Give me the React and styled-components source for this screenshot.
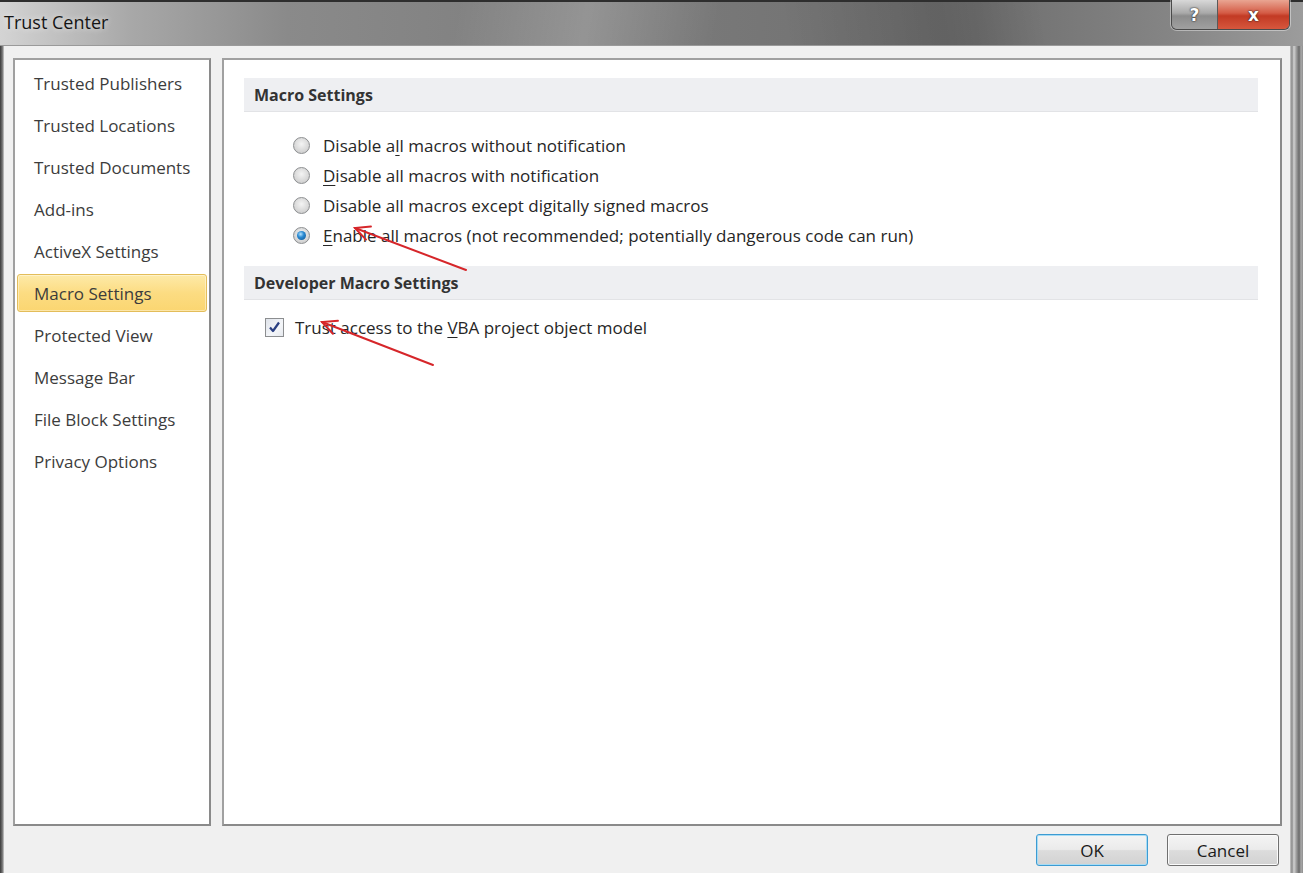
import React from "react";
import styled, { createGlobalStyle } from "styled-components";

const Global = createGlobalStyle`
  html, body {
    margin: 0;
    padding: 0;
    background: #f0f0f0;
  }
  body {
    font-family: "Open Sans", "Noto Sans", sans-serif;
  }
`;

const S = {};

S.Window = styled.div`
  position: relative;
  width: 1303px;
  height: 873px;
  display: flex;
  flex-direction: column;
  overflow: hidden;
  background: #f0f0f0;
`;

S.TitleBar = styled.div`
  height: 43px;
  display: flex;
  align-items: flex-start;
  justify-content: space-between;
  border-top: 2px solid #2e2e2e;
  border-bottom: 1px solid #9a9a9a;
  background:
    linear-gradient(100deg, rgba(255,255,255,0) 35%, rgba(255,255,255,0.18) 45%, rgba(255,255,255,0) 55%),
    linear-gradient(80deg, rgba(0,0,0,0) 60%, rgba(0,0,0,0.12) 72%, rgba(0,0,0,0) 80%),
    linear-gradient(to right, #d4d4d4 0%, #a8a8a8 10%, #8a8a8a 22%, #7a7a7a 50%, #6e6e6e 75%, #858585 90%, #9c9c9c 100%);
`;

S.Title = styled.div`
  padding: 8px 0 0 4px;
  font-size: 18px;
  color: #151515;
  text-shadow: 0 0 6px rgba(255,255,255,0.8);
`;

S.Caption = styled.div`
  display: flex;
  margin-right: 13px;
  margin-top: -2px;
  border: 1px solid #4a4a4a;
  border-top: none;
  border-radius: 0 0 6px 6px;
  overflow: hidden;
  box-shadow: 0 0 0 1px rgba(255,255,255,0.4);
`;

S.CaptionButton = styled.div`
  width: ${p => p.$w}px;
  height: 29px;
  display: flex;
  align-items: center;
  justify-content: center;
  font-family: "DejaVu Sans", sans-serif;
  font-weight: bold;
  font-size: 17px;
  color: #fff;
  text-shadow: 0 0 2px #222, 0 0 1px #222;
  background: ${p => p.$red
    ? "linear-gradient(to bottom, #e9a592 0%, #d45b45 45%, #c23a24 55%, #d6573d 100%)"
    : "linear-gradient(to bottom, #d8d8d8 0%, #a9a9a9 45%, #8c8c8c 55%, #a0a0a0 100%)"};
  border-left: ${p => p.$red ? "1px solid #5a5a5a" : "none"};
`;

S.Main = styled.div`
  flex: 1;
  display: flex;
`;

S.LeftEdge = styled.div`
  width: 4px;
  background: linear-gradient(to right, #3a3a3a, #777 60%, #cfcfcf);
`;

S.RightEdge = styled.div`
  width: 13px;
  background: linear-gradient(to right, #c8c8c8 0%, #8a8a8a 15%, #d2d2d2 30%, #9a9a9a 50%, #6a6a6a 70%, #a8a8a8 85%, #8f8f8f 100%);
`;

S.Body = styled.div`
  flex: 1;
  display: flex;
  flex-direction: column;
  padding: 12px 8px 0 9px;
  background: #f0f0f0;
`;

S.Panels = styled.div`
  height: 768px;
  display: flex;
  gap: 11px;
`;

S.Panel = styled.div`
  box-sizing: border-box;
  background: #fff;
  border: 2px solid #a0a0a0;
  border-right-color: #8a8a8a;
  border-bottom-color: #8a8a8a;
  width: ${p => p.$w ? `${p.$w}px` : "auto"};
  flex: ${p => p.$w ? "none" : 1};
`;

S.Nav = styled.div`
  display: flex;
  flex-direction: column;
  padding: 4px 2px 0 2px;
`;

S.NavItem = styled.div`
  height: 38px;
  margin-bottom: 4px;
  box-sizing: border-box;
  display: flex;
  align-items: center;
  padding-left: 16px;
  font-size: 17px;
  color: #3c3c3c;
  border-radius: 3px;
  border: 1px solid ${p => p.$active ? "#e3bd5a" : "transparent"};
  background: ${p => p.$active ? "linear-gradient(to bottom, #fdeaa8 0%, #fcdc82 50%, #fbd671 100%)" : "transparent"};
  box-shadow: ${p => p.$active ? "inset 0 0 0 1px rgba(255,255,255,0.4)" : "none"};
`;

S.Content = styled.div`
  padding: 18px 22px 0 20px;
  display: flex;
  flex-direction: column;
`;

S.SectionHeader = styled.div`
  height: 34px;
  box-sizing: border-box;
  display: flex;
  align-items: center;
  padding-left: 10px;
  background: #eeeff2;
  border-bottom: 1px solid #e2e3e6;
  font-size: 16px;
  font-weight: bold;
  color: #333;
`;

S.OptionList = styled.div`
  display: flex;
  flex-direction: column;
  padding: ${p => p.$pad};
`;

S.Option = styled.label`
  height: 30px;
  display: flex;
  align-items: center;
  font-size: 17px;
  color: #262626;
`;

S.Radio = styled.span`
  width: 17px;
  height: 17px;
  box-sizing: border-box;
  border-radius: 50%;
  border: 1px solid #8c8e90;
  background: radial-gradient(circle at 50% 40%, #f4f4f4 0%, #dadada 55%, #c4c4c4 100%);
  margin-right: 13px;
  display: flex;
  align-items: center;
  justify-content: center;
  &::after {
    content: "";
    display: ${p => p.$checked ? "block" : "none"};
    width: 9px;
    height: 9px;
    border-radius: 50%;
    background: radial-gradient(circle at 40% 35%, #b4e2ff 0%, #2a8ad2 40%, #0b4f8e 100%);
  }
`;

S.Check = styled.span`
  width: 19px;
  height: 19px;
  box-sizing: border-box;
  border: 1px solid #8c8e90;
  background: linear-gradient(135deg, #dfe3ea 0%, #f4f6f9 60%, #e6e9ee 100%);
  margin-right: 11px;
  display: flex;
  align-items: center;
  justify-content: center;
`;

S.Key = styled.span`
  text-decoration: underline;
  text-underline-offset: 3px;
`;

S.Footer = styled.div`
  flex: 1;
  display: flex;
  justify-content: flex-end;
  align-items: flex-start;
  gap: 19px;
  padding: 8px 3px 0 0;
`;

S.Button = styled.button`
  width: 112px;
  height: 32px;
  font-family: "Open Sans", "Noto Sans", sans-serif;
  font-size: 17px;
  color: #1a1a1a;
  border-radius: 3px;
  border: 1px solid ${p => p.$default ? "#3d9bd2" : "#707070"};
  box-shadow: ${p => p.$default ? "inset 0 0 0 1px #a7dcf5" : "inset 0 0 0 1px #fbfbfb"};
  background: linear-gradient(to bottom, #f4f4f4 0%, #ebebeb 48%, #dcdcdc 52%, #d2d2d2 100%);
  padding: 0;
`;

S.Overlay = styled.svg`
  position: absolute;
  left: 0;
  top: 0;
  pointer-events: none;
`;

const macroOptions = [
  { label: <>Disable a<S.Key>l</S.Key>l macros without notification</> },
  { label: <><S.Key>D</S.Key>isable all macros with notification</> },
  { label: <>Disable all macros except di<S.Key>g</S.Key>itally signed macros</> },
  { label: <><S.Key>E</S.Key>nable all macros (not recommended; potentially dangerous code can run)</>, checked: true },
];

const navItems = [
  "Trusted Publishers",
  "Trusted Locations",
  "Trusted Documents",
  "Add-ins",
  "ActiveX Settings",
  "Macro Settings",
  "Protected View",
  "Message Bar",
  "File Block Settings",
  "Privacy Options",
];

const Arrow = ({ x1, y1, x2, y2 }) => {
  const a = Math.atan2(y1 - y2, x1 - x2);
  const len = 16;
  const spread = 0.45;
  const p1 = [x2 + len * Math.cos(a - spread), y2 + len * Math.sin(a - spread)];
  const p2 = [x2 + len * Math.cos(a + spread), y2 + len * Math.sin(a + spread)];
  return (
    <g stroke="#d6262a" strokeWidth="2" fill="none" strokeLinecap="round">
      <line x1={x1} y1={y1} x2={x2} y2={y2} />
      <polyline points={`${p1[0]},${p1[1]} ${x2},${y2} ${p2[0]},${p2[1]}`} />
    </g>
  );
};

const App = () => {
  return (
    <S.Window>
      <Global />
      <S.TitleBar>
        <S.Title>Trust Center</S.Title>
        <S.Caption>
          <S.CaptionButton $w={45}>?</S.CaptionButton>
          <S.CaptionButton $w={71} $red>x</S.CaptionButton>
        </S.Caption>
      </S.TitleBar>
      <S.Main>
        <S.LeftEdge />
        <S.Body>
          <S.Panels>
            <S.Panel $w={198}>
              <S.Nav>
                {navItems.map(item => (
                  <S.NavItem key={item} $active={item === "Macro Settings"}>{item}</S.NavItem>
                ))}
              </S.Nav>
            </S.Panel>
            <S.Panel>
              <S.Content>
                <S.SectionHeader>Macro Settings</S.SectionHeader>
                <S.OptionList $pad="18px 0 16px 49px">
                  {macroOptions.map((o, i) => (
                    <S.Option key={i}>
                      <S.Radio $checked={o.checked} />
                      <span>{o.label}</span>
                    </S.Option>
                  ))}
                </S.OptionList>
                <S.SectionHeader>Developer Macro Settings</S.SectionHeader>
                <S.OptionList $pad="12px 0 0 21px">
                  <S.Option>
                    <S.Check>
                      <svg width="13" height="13" viewBox="0 0 13 13">
                        <path d="M2 6.5 L5 10 L11 1.5" stroke="#2a3f82" strokeWidth="2.2" fill="none" strokeLinejoin="round" />
                      </svg>
                    </S.Check>
                    <span>Trust access to the <S.Key>V</S.Key>BA project object model</span>
                  </S.Option>
                </S.OptionList>
              </S.Content>
            </S.Panel>
          </S.Panels>
          <S.Footer>
            <S.Button $default>OK</S.Button>
            <S.Button>Cancel</S.Button>
          </S.Footer>
        </S.Body>
        <S.RightEdge />
      </S.Main>
      <S.Overlay width="1303" height="873">
        <Arrow x1={466} y1={270} x2={355} y2={228} />
        <Arrow x1={433} y1={365} x2={322} y2={322} />
      </S.Overlay>
    </S.Window>
  );
};

export default App;
